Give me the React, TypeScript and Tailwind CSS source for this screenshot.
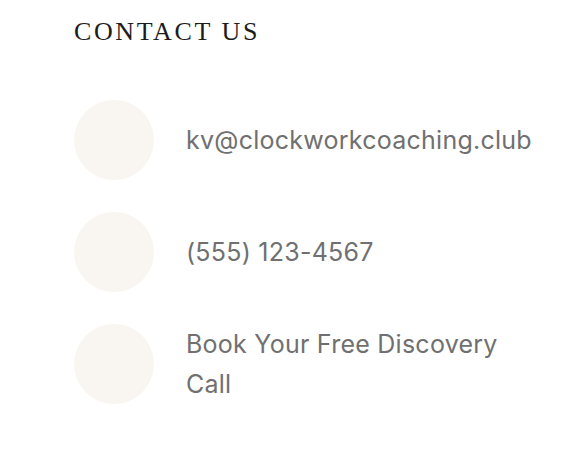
const items = [
  "kv@clockworkcoaching.club",
  "(555) 123-4567",
  "Book Your Free Discovery Call",
];

export default function App() {
  return (
    <div className="min-h-screen bg-white pl-[74px] pr-[30px] pt-4">
      <h2 className="text-[26px] leading-[32px] tracking-[0.1em] text-[#1c1c1c] font-['Liberation_Serif',serif]">
        CONTACT US
      </h2>

      <ul className="mt-[52px] flex flex-col gap-8">
        {items.map((text) => (
          <li key={text} className="flex items-center gap-8">
            <div className="h-20 w-20 shrink-0 rounded-full bg-[#f9f6f1]" />
            <span className="max-w-[350px] text-[25px] leading-[40px] tracking-[0.01em] text-[#707070] font-['Inter',sans-serif]">
              {text}
            </span>
          </li>
        ))}
      </ul>
    </div>
  );
}
